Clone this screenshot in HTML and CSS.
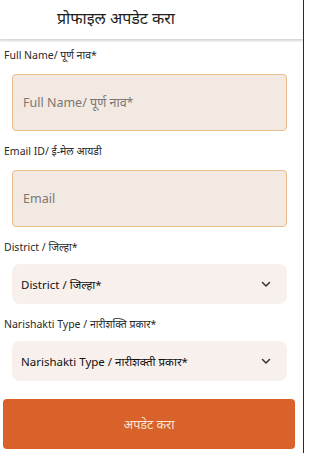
FILE: index.html
```html
<!DOCTYPE html>
<html lang="mr">
<head>
<meta charset="utf-8">
<link rel="stylesheet" href="styles.css">
</head>
<body>
<div class="page">
  <header class="topbar">
    <h1 class="title">प्रोफाइल अपडेट करा</h1>
  </header>
  <form class="form">
    <div class="field">
      <label class="label">Full Name/ पूर्ण नाव*</label>
      <input class="input" type="text" placeholder="Full Name/ पूर्ण नाव*">
    </div>
    <div class="field">
      <label class="label">Email ID/ ई-मेल आयडी</label>
      <input class="input" type="text" placeholder="Email">
    </div>
    <div class="field field-select">
      <label class="label">District / जिल्हा*</label>
      <div class="select">
        <span>District / जिल्हा*</span>
        <svg class="chev" width="10" height="7" viewBox="0 0 10 7"><path d="M1.5 1.5 L5 5 L8.5 1.5" fill="none" stroke="#3a3a3a" stroke-width="1.6" stroke-linecap="round" stroke-linejoin="round"/></svg>
      </div>
    </div>
    <div class="field field-select">
      <label class="label">Narishakti Type / नारीशक्ति प्रकार*</label>
      <div class="select">
        <span>Narishakti Type / नारीशक्ती प्रकार*</span>
        <svg class="chev" width="10" height="7" viewBox="0 0 10 7"><path d="M1.5 1.5 L5 5 L8.5 1.5" fill="none" stroke="#3a3a3a" stroke-width="1.6" stroke-linecap="round" stroke-linejoin="round"/></svg>
      </div>
    </div>
    <button class="submit" type="button">अपडेट करा</button>
  </form>
</div>
</body>
</html>
```
FILE: styles.css
```css
html, body {
  margin: 0;
  padding: 0;
  background: #ffffff;
}
body {
  font-family: "Noto Sans", "Open Sans", sans-serif;
  color: #222;
}
.page {
  width: 303px;
  height: 453px;
  border-right: 1px solid #2a2a2a;
  overflow: hidden;
  background: #fff;
}
.topbar {
  height: 39px;
  background: #fff;
  box-shadow: 0 2px 2px rgba(0, 0, 0, 0.16);
  display: flex;
  align-items: center;
  position: relative;
}
.title {
  margin: 0;
  padding-left: 57px;
  font-size: 16px;
  font-weight: 400;
  color: #1e1e1e;
  line-height: 20px;
  margin-top: -3px;
}
.form {
  display: flex;
  flex-direction: column;
  padding-top: 9px;
}
.field {
  display: flex;
  flex-direction: column;
  margin-bottom: 13px;
}
.label {
  font-size: 10.5px;
  line-height: 14px;
  color: #2a2a2a;
  padding-left: 4px;
  margin-bottom: 12px;
}
.field-select .label {
  margin-bottom: 10px;
}
.input {
  box-sizing: border-box;
  margin: 0 0 0 12px;
  width: 275px;
  height: 57px;
  border: 1px solid #e9bc8a;
  border-radius: 4px;
  background: #f3e9e3;
  padding: 0 0 0 10px;
  font-family: inherit;
  font-size: 12.5px;
  color: #333;
  outline: none;
}
.input::placeholder {
  color: #7b7671;
}
.select {
  box-sizing: border-box;
  margin-left: 12px;
  width: 275px;
  height: 40px;
  border-radius: 8px;
  background: #f7f0ed;
  display: flex;
  align-items: center;
  justify-content: space-between;
  padding: 0 16px 0 9px;
  font-size: 11.5px;
  font-weight: 400;
  color: #111;
}
.chev {
  display: block;
}
.submit {
  margin: 5px 0 0 3px;
  width: 292px;
  height: 50px;
  border: none;
  border-radius: 4px;
  background: #d8622a;
  color: #fbe2d2;
  font-family: inherit;
  font-size: 12.5px;
  padding: 0;
}
```
